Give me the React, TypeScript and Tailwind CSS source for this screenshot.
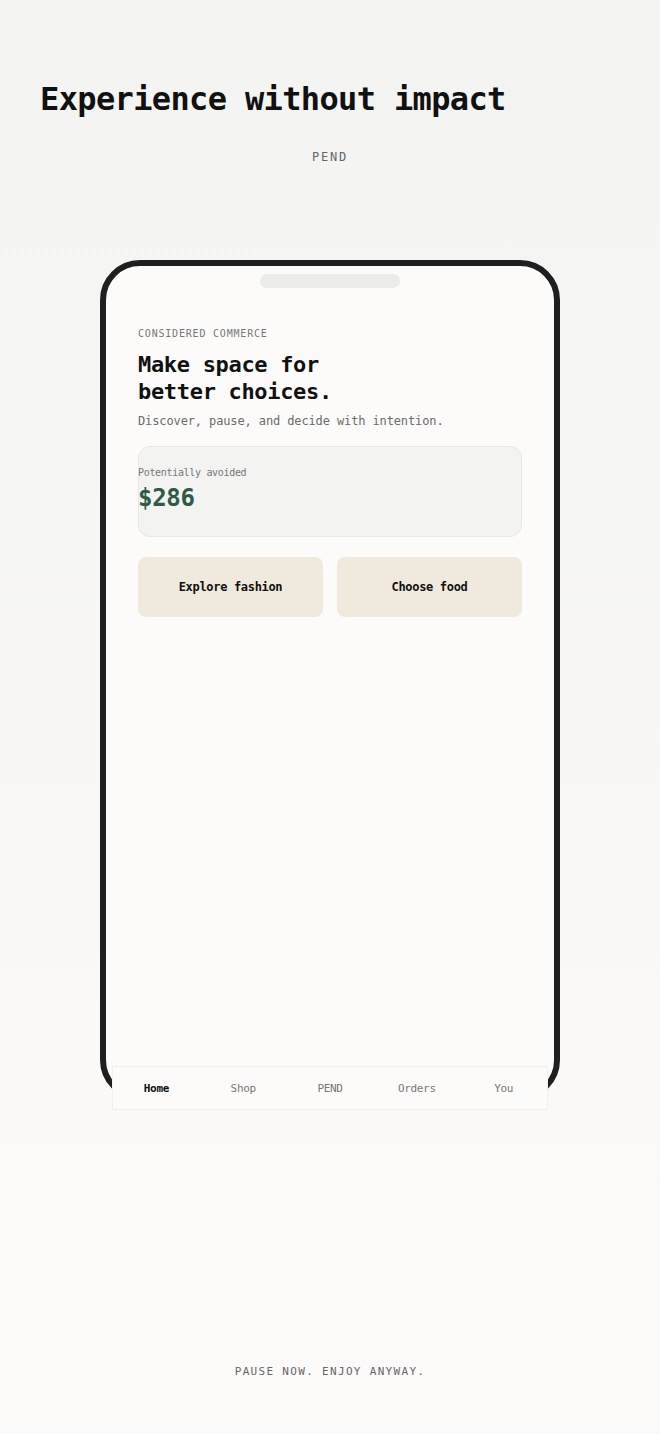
const mono = { fontFamily: '"DejaVu Sans Mono", "Liberation Mono", monospace' };

const navItems = ["Home", "Shop", "PEND", "Orders", "You"];

export default function App() {
  return (
    <div
      style={mono}
      className="min-h-[1434px] w-full bg-gradient-to-b from-[#f3f3f1] to-[#fcfbfa] tracking-[-0.02em] text-[#111]"
    >
      {/* Header */}
      <div className="px-10 pt-[80px]">
        <h1 className="text-[32px] font-bold leading-[38px] tracking-[-0.02em] text-[#111]">
          Experience without impact
        </h1>
        <p className="mt-[31px] text-center text-[12px] leading-[16px] tracking-[0.15em] text-[#666]">
          PEND
        </p>
      </div>

      {/* Phone */}
      <div className="mt-[95px] flex justify-center">
        <div className="relative h-[840px] w-[460px] rounded-[40px] border-[6px] border-[#1f1f1f] bg-[#fcfbf9]">
          <div className="mx-auto mt-2 h-[14px] w-[140px] rounded-full bg-[#ebebea]" />

          <div className="px-8 pt-[39px]">
            <p className="text-[10px] leading-[14px] tracking-[0.08em] text-[#777]">
              CONSIDERED COMMERCE
            </p>
            <h2 className="mt-[10px] text-[22px] font-bold leading-[27px] text-[#111]">
              Make space for
              <br />
              better choices.
            </h2>
            <p className="mt-[8px] text-[12px] leading-[16px] tracking-[-0.01em] text-[#6b6b6b]">
              Discover, pause, and decide with intention.
            </p>

            {/* Avoided card */}
            <div className="mt-[17px] rounded-xl border border-[#e8e8e5] bg-[#f3f3f1] pt-[19px] pb-[23px]">
              <p className="-ml-px text-[10px] leading-[14px] text-[#777]">Potentially avoided</p>
              <p className="-ml-px mt-[3px] text-[24px] font-bold leading-[30px] text-[#2f5a47]">$286</p>
            </div>

            {/* Actions */}
            <div className="mt-5 grid grid-cols-2 gap-[14px]">
              <button className="h-[60px] rounded-lg bg-[#f0e9dd] text-[12px] font-bold text-[#111]">
                Explore fashion
              </button>
              <button className="h-[60px] rounded-lg bg-[#f0e9dd] text-[12px] font-bold text-[#111]">
                Choose food
              </button>
            </div>
          </div>

          {/* Bottom nav */}
          <div className="absolute left-[6px] right-[6px] bottom-[-16px] grid h-[44px] grid-cols-5 items-center border border-[#efefed] bg-[#fcfbf9] pt-[3px]">
            {navItems.map((item, i) => (
              <span
                key={item}
                className={
                  i === 0
                    ? "text-center text-[11px] font-bold text-[#111]"
                    : "text-center text-[11px] text-[#777]"
                }
              >
                {item}
              </span>
            ))}
          </div>
        </div>
      </div>

      {/* Footer */}
      <p className="mt-[264px] text-center text-[11px] leading-[16px] tracking-[0.12em] text-[#666]">
        PAUSE NOW. ENJOY ANYWAY.
      </p>
    </div>
  );
}
